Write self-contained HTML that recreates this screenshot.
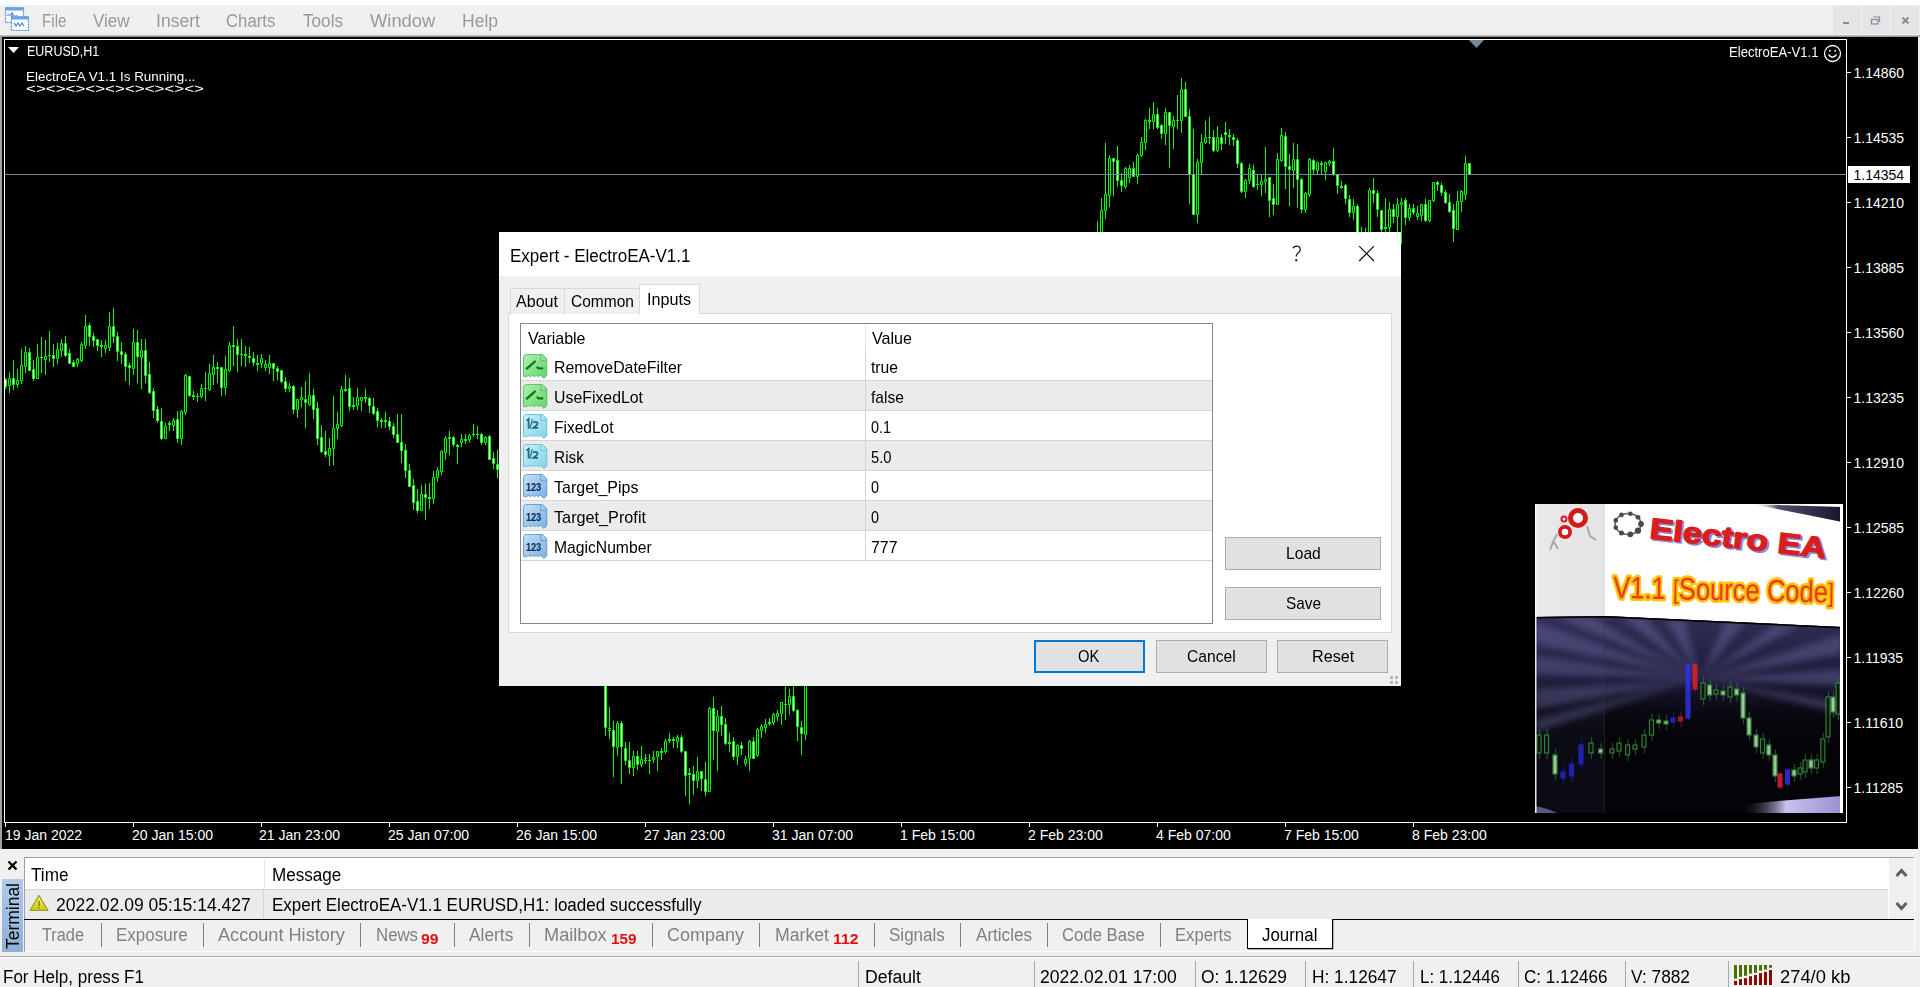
<!DOCTYPE html><html><head><meta charset="utf-8"><style>
*{margin:0;padding:0;box-sizing:border-box}
html,body{width:1920px;height:987px;overflow:hidden;background:#f0f0f0;font-family:"Liberation Sans",sans-serif;position:relative}
.t{position:absolute;white-space:nowrap}
svg{position:absolute;left:0;top:0}
</style></head><body><div style="position:absolute;left:0px;top:0px;width:1920px;height:5px;background:#fff"></div><div style="position:absolute;left:0px;top:5px;width:1920px;height:30px;background:#f0f0f0"></div><svg style="left:4px;top:6px" width="26" height="26" viewBox="0 0 26 26">
<rect x="1.5" y="1.5" width="18" height="15" fill="#fff" stroke="#4a8ae8" stroke-width="1.2" stroke-dasharray="2 1"/>
<rect x="1.5" y="1.5" width="18" height="3" fill="#6aa0f0"/>
<path d="M3 9 h4 l1-2 l1 3 h5" stroke="#3a7ad8" fill="none" stroke-width="1.2"/>
<rect x="7.5" y="10.5" width="17" height="14" fill="#fff" stroke="#4a8ae8" stroke-width="1.2" stroke-dasharray="2 1"/>
<rect x="7.5" y="10.5" width="17" height="3" fill="#6aa0f0"/>
<path d="M10 17 l2 3 l2-3 l2 3 l2-3 l2 3" stroke="#3a7ad8" fill="none" stroke-width="1.2"/>
</svg><div class="t " style="left:41.5px;top:11.76px;font-size:18px;line-height:18px;color:#999999;transform:scaleX(0.8447);transform-origin:0 0;">File</div><div class="t " style="left:93px;top:11.76px;font-size:18px;line-height:18px;color:#999999;transform:scaleX(0.9486);transform-origin:0 0;">View</div><div class="t " style="left:156px;top:11.76px;font-size:18px;line-height:18px;color:#999999;transform:scaleX(0.9774);transform-origin:0 0;">Insert</div><div class="t " style="left:226px;top:11.76px;font-size:18px;line-height:18px;color:#999999;transform:scaleX(0.9318);transform-origin:0 0;">Charts</div><div class="t " style="left:302.5px;top:11.76px;font-size:18px;line-height:18px;color:#999999;transform:scaleX(0.9519);transform-origin:0 0;">Tools</div><div class="t " style="left:369.7px;top:11.76px;font-size:18px;line-height:18px;color:#999999;transform:scaleX(1.0200);transform-origin:0 0;">Window</div><div class="t " style="left:461.6px;top:11.76px;font-size:18px;line-height:18px;color:#999999;transform:scaleX(0.9725);transform-origin:0 0;">Help</div><div style="position:absolute;left:1833px;top:6px;width:28px;height:28px;background:#e5e5e5"></div><div style="position:absolute;left:1862px;top:6px;width:28px;height:28px;background:#e5e5e5"></div><div style="position:absolute;left:1891px;top:6px;width:28px;height:28px;background:#e5e5e5"></div><svg style="left:1833px;top:6px" width="86" height="28">
<rect x="10" y="16" width="6" height="2" fill="#7e8e9e"/>
<rect x="38.5" y="13.5" width="6.5" height="4.5" fill="none" stroke="#7e8e9e" stroke-width="1.2"/>
<path d="M40.5 11 h6 v5" fill="none" stroke="#7e8e9e" stroke-width="1.2"/>
<path d="M69.5 11.5 l6 6 M75.5 11.5 l-6 6" stroke="#7e8e9e" stroke-width="2"/>
</svg><div style="position:absolute;left:0px;top:35px;width:1920px;height:2px;background:linear-gradient(#c8c8c8,#8a8a8a)"></div><div style="position:absolute;left:0px;top:37px;width:2px;height:812px;background:#a0a0a0"></div><div style="position:absolute;left:2px;top:37px;width:1916px;height:812px;background:#000"></div><div style="position:absolute;left:1918px;top:37px;width:2px;height:812px;background:#f0f0f0"></div><div style="position:absolute;left:4px;top:39px;width:1843px;height:784px;border:1px solid #fff"></div><svg width="1920" height="987" style="left:0;top:0"><defs><clipPath id="cc"><rect x="5" y="40" width="1841" height="782"/></clipPath></defs><g clip-path="url(#cc)"><path d="M5.5 378V389M9.5 372V393M13.5 360V390M17.5 369V388M21.5 349V384M25.5 346V373M29.5 348V371M33.5 360V381M37.5 344V379M41.5 337V373M45.5 340V375M49.5 331V362M53.5 344V367M57.5 343V364M61.5 339V357M65.5 336V357M69.5 349V364M73.5 360V367M77.5 358V367M81.5 342V362M85.5 315V349M89.5 323V346M93.5 333V347M97.5 339V351M101.5 340V357M105.5 340V353M109.5 312V351M113.5 308V343M117.5 332V361M121.5 342V364M125.5 352V381M129.5 363V385M133.5 329V375M137.5 330V383M141.5 339V389M145.5 339V383M149.5 362V394M153.5 388V418M157.5 406V423M161.5 408V440M165.5 423V439M169.5 421V431M173.5 418V431M177.5 411V443M181.5 410V445M185.5 374V415M189.5 376V397M193.5 391V400M197.5 393V402M201.5 384V398M205.5 372V401M209.5 364V391M213.5 355V385M217.5 362V383M221.5 367V396M225.5 356V395M229.5 342V372M233.5 326V366M237.5 339V372M241.5 339V366M245.5 346V367M249.5 347V363M253.5 352V366M257.5 355V371M261.5 354V368M265.5 360V371M269.5 355V374M273.5 363V381M277.5 366V380M281.5 370V383M285.5 377V392M289.5 383V392M293.5 385V414M297.5 399V418M301.5 387V407M305.5 381V428M309.5 373V406M313.5 389V419M317.5 402V445M321.5 425V453M325.5 431V457M329.5 438V466M333.5 396V465M337.5 412V439M341.5 386V427M345.5 375V392M349.5 378V411M353.5 397V410M357.5 388V410M361.5 397V411M365.5 389V403M369.5 397V413M373.5 398V415M377.5 408V427M381.5 418V428M385.5 412V428M389.5 417V430M393.5 423V438M397.5 414V443M401.5 414V463M405.5 444V478M409.5 464V487M413.5 479V510M417.5 489V513M421.5 485V511M425.5 484V520M429.5 483V509M433.5 471V504M437.5 467V482M441.5 450V475M445.5 436V460M449.5 431V455M453.5 436V447M457.5 444V464M461.5 434V447M465.5 434V444M469.5 434V443M473.5 424V437M477.5 426V439M481.5 433V445M485.5 436V445M489.5 435V460M493.5 452V469M497.5 450V478M501.5 472V480M505.5 480V487M509.5 491V497M513.5 489V508M517.5 499V511M521.5 515V524M525.5 520V531M529.5 527V544M533.5 535V546M537.5 541V557M541.5 550V563M545.5 555V575M549.5 565V583M553.5 578V596M557.5 590V601M561.5 593V606M565.5 605V614M569.5 614V628M573.5 619V630M577.5 626V639M581.5 642V651M585.5 647V657M589.5 653V674M593.5 658V677M597.5 666V675M601.5 668V677M605.5 655V736M609.5 707V739M613.5 721V777M617.5 721V756M621.5 721V784M625.5 742V765M629.5 742V774M633.5 751V776M637.5 751V770M641.5 746V767M645.5 754V764M649.5 754V774M653.5 751V763M657.5 751V771M661.5 748V760M665.5 739V754M669.5 733V743M673.5 737V748M677.5 735V748M681.5 735V753M685.5 751V796M689.5 768V804M693.5 766V795M697.5 757V788M701.5 771V791M705.5 762V796M709.5 707V792M713.5 697V760M717.5 710V771M721.5 706V736M725.5 718V745M729.5 733V752M733.5 737V760M737.5 744V765M741.5 742V755M745.5 756V766M749.5 740V771M753.5 737V759M757.5 728V757M761.5 724V738M765.5 719V733M769.5 718V726M773.5 713V725M777.5 710V721M781.5 702V725M785.5 686V720M789.5 689V715M793.5 686V712M797.5 709V741M801.5 721V755M805.5 660V740M809.5 665V680M813.5 663V679M817.5 666V677M821.5 666V681M825.5 665V676M829.5 660V671M833.5 652V665M837.5 644V659M841.5 637V648M845.5 637V646M849.5 624V642M853.5 622V632M857.5 609V630M861.5 602V620M865.5 599V616M869.5 597V614M873.5 594V600M877.5 581V597M881.5 573V588M885.5 572V588M889.5 561V575M893.5 552V567M897.5 546V570M901.5 544V557M905.5 538V554M909.5 528V546M913.5 526V540M917.5 514V536M921.5 511V527M925.5 504V523M929.5 494V510M933.5 495V507M937.5 487V498M941.5 480V494M945.5 475V491M949.5 463V488M953.5 463V477M957.5 458V470M961.5 451V465M965.5 446V458M969.5 432V451M973.5 430V451M977.5 424V442M981.5 417V436M985.5 411V425M989.5 402V417M993.5 399V416M997.5 393V405M1001.5 389V402M1005.5 374V391M1009.5 378V390M1013.5 364V380M1017.5 361V374M1021.5 350V370M1025.5 352V361M1029.5 339V357M1033.5 339V346M1037.5 327V350M1041.5 325V334M1045.5 318V329M1049.5 311V321M1053.5 305V320M1057.5 294V315M1061.5 294V306M1065.5 279V302M1069.5 276V296M1073.5 271V286M1077.5 262V285M1081.5 258V272M1085.5 250V267M1089.5 243V258M1093.5 241V255M1097.5 221V256M1101.5 198V251M1105.5 143V219M1109.5 155V207M1113.5 158V196M1117.5 146V187M1121.5 173V192M1125.5 167V189M1129.5 165V183M1133.5 162V177M1137.5 154V184M1141.5 137V157M1145.5 119V150M1149.5 108V129M1153.5 102V129M1157.5 108V129M1161.5 124V139M1165.5 108V145M1169.5 112V168M1173.5 116V149M1177.5 95V129M1181.5 78V133M1185.5 82V117M1189.5 109V204M1193.5 129V215M1197.5 159V223M1201.5 134V175M1205.5 121V144M1209.5 117V144M1213.5 130V152M1217.5 126V152M1221.5 134V150M1225.5 122V144M1229.5 129V145M1233.5 134V146M1237.5 138V168M1241.5 162V193M1245.5 179V198M1249.5 164V184M1253.5 165V188M1257.5 174V190M1261.5 175V196M1265.5 147V193M1269.5 177V217M1273.5 184V215M1277.5 153V205M1281.5 128V162M1285.5 132V189M1289.5 154V206M1293.5 143V188M1297.5 144V208M1301.5 178V213M1305.5 192V213M1309.5 158V197M1313.5 159V175M1317.5 162V175M1321.5 161V175M1325.5 162V180M1329.5 160V166M1333.5 148V176M1337.5 174V194M1341.5 181V189M1345.5 184V204M1349.5 195V217M1353.5 199V220M1357.5 204V246M1361.5 227V256M1365.5 228V251M1369.5 188V243M1373.5 178V203M1377.5 190V217M1381.5 210V236M1385.5 198V236M1389.5 202V236M1393.5 204V223M1397.5 198V236M1401.5 198V244M1405.5 198V225M1409.5 204V221M1413.5 204V215M1417.5 206V220M1421.5 204V221M1425.5 199V222M1429.5 200V222M1433.5 182V202M1437.5 181V191M1441.5 183V196M1445.5 190V204M1449.5 194V213M1453.5 204V242M1457.5 191V230M1461.5 190V212M1465.5 156V200M1469.5 163V175" stroke="#00ff00" stroke-width="1" fill="none"/><path d="M8.5 378.5h2v7h-2zM16.5 380.5h2v4h-2zM20.5 365.5h2v15h-2zM24.5 352.5h2v14h-2zM36.5 357.5h2v21h-2zM44.5 356.5h2v3h-2zM56.5 349.5h2v9h-2zM60.5 343.5h2v7h-2zM76.5 359.5h2v4h-2zM80.5 344.5h2v16h-2zM84.5 326.5h2v19h-2zM104.5 345.5h2v3h-2zM108.5 326.5h2v21h-2zM132.5 342.5h2v26h-2zM140.5 350.5h2v7h-2zM164.5 426.5h2v12h-2zM172.5 420.5h2v5h-2zM180.5 411.5h2v27h-2zM184.5 375.5h2v37h-2zM200.5 388.5h2v8h-2zM208.5 373.5h2v16h-2zM212.5 367.5h2v7h-2zM224.5 369.5h2v18h-2zM228.5 345.5h2v25h-2zM260.5 358.5h2v5h-2zM264.5 364.5h2v3h-2zM268.5 363.5h2v4h-2zM288.5 386.5h2v2h-2zM296.5 399.5h2v10h-2zM300.5 397.5h2v2h-2zM308.5 395.5h2v9h-2zM328.5 448.5h2v7h-2zM332.5 428.5h2v20h-2zM336.5 424.5h2v4h-2zM340.5 389.5h2v36h-2zM356.5 397.5h2v8h-2zM360.5 397.5h2v3h-2zM420.5 494.5h2v16h-2zM432.5 477.5h2v21h-2zM436.5 470.5h2v7h-2zM440.5 451.5h2v20h-2zM444.5 438.5h2v14h-2zM460.5 439.5h2v3h-2zM468.5 435.5h2v4h-2zM484.5 437.5h2v5h-2zM500.5 472.5h2v4h-2zM504.5 480.5h2v4h-2zM512.5 492.5h2v13h-2zM516.5 501.5h2v8h-2zM520.5 516.5h2v3h-2zM524.5 524.5h2v2h-2zM532.5 539.5h2v5h-2zM544.5 560.5h2v11h-2zM568.5 615.5h2v10h-2zM580.5 642.5h2v3h-2zM584.5 650.5h2v4h-2zM588.5 655.5h2v12h-2zM596.5 666.5h2v7h-2zM600.5 669.5h2v4h-2zM616.5 723.5h2v24h-2zM632.5 756.5h2v11h-2zM640.5 759.5h2v5h-2zM652.5 757.5h2v2h-2zM656.5 751.5h2v5h-2zM664.5 741.5h2v10h-2zM676.5 737.5h2v4h-2zM696.5 771.5h2v9h-2zM708.5 708.5h2v83h-2zM716.5 716.5h2v15h-2zM736.5 745.5h2v11h-2zM744.5 759.5h2v4h-2zM748.5 741.5h2v17h-2zM756.5 729.5h2v26h-2zM760.5 726.5h2v4h-2zM764.5 724.5h2v3h-2zM772.5 714.5h2v8h-2zM776.5 713.5h2v3h-2zM780.5 702.5h2v11h-2zM788.5 696.5h2v8h-2zM804.5 670.5h2v64h-2zM808.5 666.5h2v12h-2zM828.5 664.5h2v4h-2zM832.5 655.5h2v4h-2zM836.5 649.5h2v4h-2zM852.5 624.5h2v4h-2zM856.5 612.5h2v13h-2zM860.5 607.5h2v7h-2zM864.5 601.5h2v10h-2zM872.5 594.5h2v2h-2zM880.5 578.5h2v5h-2zM884.5 575.5h2v7h-2zM900.5 549.5h2v3h-2zM904.5 539.5h2v11h-2zM912.5 528.5h2v10h-2zM916.5 519.5h2v10h-2zM920.5 515.5h2v9h-2zM924.5 508.5h2v8h-2zM928.5 499.5h2v9h-2zM932.5 499.5h2v4h-2zM936.5 492.5h2v4h-2zM940.5 482.5h2v11h-2zM944.5 477.5h2v10h-2zM948.5 467.5h2v14h-2zM960.5 452.5h2v6h-2zM964.5 448.5h2v8h-2zM968.5 437.5h2v8h-2zM976.5 426.5h2v10h-2zM984.5 411.5h2v7h-2zM992.5 404.5h2v5h-2zM1000.5 391.5h2v5h-2zM1004.5 378.5h2v9h-2zM1016.5 366.5h2v3h-2zM1040.5 327.5h2v5h-2zM1044.5 321.5h2v7h-2zM1052.5 308.5h2v8h-2zM1060.5 294.5h2v6h-2zM1064.5 284.5h2v13h-2zM1068.5 281.5h2v11h-2zM1072.5 272.5h2v12h-2zM1080.5 261.5h2v10h-2zM1084.5 254.5h2v12h-2zM1088.5 248.5h2v8h-2zM1096.5 232.5h2v18h-2zM1100.5 210.5h2v30h-2zM1104.5 194.5h2v16h-2zM1108.5 158.5h2v37h-2zM1124.5 168.5h2v18h-2zM1128.5 168.5h2v9h-2zM1136.5 155.5h2v21h-2zM1140.5 142.5h2v13h-2zM1144.5 120.5h2v22h-2zM1152.5 114.5h2v7h-2zM1164.5 112.5h2v21h-2zM1172.5 120.5h2v6h-2zM1180.5 89.5h2v31h-2zM1196.5 162.5h2v52h-2zM1200.5 142.5h2v20h-2zM1204.5 137.5h2v5h-2zM1216.5 137.5h2v13h-2zM1244.5 180.5h2v11h-2zM1248.5 168.5h2v12h-2zM1260.5 181.5h2v3h-2zM1264.5 179.5h2v2h-2zM1276.5 159.5h2v45h-2zM1280.5 135.5h2v25h-2zM1292.5 159.5h2v11h-2zM1304.5 193.5h2v16h-2zM1308.5 159.5h2v35h-2zM1316.5 162.5h2v8h-2zM1324.5 162.5h2v9h-2zM1328.5 161.5h2v2h-2zM1352.5 206.5h2v6h-2zM1364.5 236.5h2v9h-2zM1368.5 190.5h2v48h-2zM1388.5 209.5h2v18h-2zM1396.5 204.5h2v12h-2zM1400.5 202.5h2v2h-2zM1408.5 208.5h2v9h-2zM1416.5 213.5h2v3h-2zM1420.5 204.5h2v11h-2zM1428.5 200.5h2v20h-2zM1432.5 182.5h2v18h-2zM1456.5 201.5h2v28h-2zM1460.5 191.5h2v10h-2zM1464.5 163.5h2v31h-2z" stroke="#00ff00" stroke-width="1" fill="#000"/><path d="M4.5 379.5h2v7h-2zM12.5 378.5h2v6h-2zM28.5 352.5h2v18h-2zM32.5 369.5h2v9h-2zM52.5 355.5h2v3h-2zM64.5 343.5h2v12h-2zM68.5 353.5h2v10h-2zM72.5 362.5h2v4h-2zM88.5 325.5h2v11h-2zM92.5 336.5h2v4h-2zM96.5 339.5h2v6h-2zM112.5 326.5h2v10h-2zM116.5 336.5h2v15h-2zM120.5 351.5h2v3h-2zM124.5 354.5h2v12h-2zM128.5 365.5h2v2h-2zM136.5 342.5h2v14h-2zM144.5 350.5h2v25h-2zM148.5 374.5h2v18h-2zM152.5 391.5h2v19h-2zM156.5 409.5h2v11h-2zM160.5 421.5h2v17h-2zM176.5 419.5h2v19h-2zM188.5 376.5h2v19h-2zM220.5 367.5h2v20h-2zM236.5 346.5h2v8h-2zM252.5 358.5h2v4h-2zM272.5 363.5h2v5h-2zM276.5 368.5h2v3h-2zM280.5 370.5h2v11h-2zM284.5 381.5h2v7h-2zM292.5 386.5h2v23h-2zM304.5 399.5h2v3h-2zM312.5 395.5h2v14h-2zM316.5 408.5h2v30h-2zM320.5 437.5h2v14h-2zM324.5 451.5h2v3h-2zM348.5 388.5h2v18h-2zM368.5 398.5h2v7h-2zM372.5 406.5h2v7h-2zM376.5 411.5h2v9h-2zM388.5 421.5h2v5h-2zM392.5 426.5h2v8h-2zM396.5 434.5h2v8h-2zM400.5 442.5h2v8h-2zM404.5 450.5h2v20h-2zM408.5 470.5h2v16h-2zM412.5 485.5h2v17h-2zM416.5 501.5h2v9h-2zM424.5 494.5h2v3h-2zM452.5 437.5h2v7h-2zM480.5 434.5h2v8h-2zM488.5 436.5h2v23h-2zM492.5 458.5h2v5h-2zM496.5 464.5h2v5h-2zM528.5 530.5h2v8h-2zM536.5 546.5h2v9h-2zM540.5 551.5h2v9h-2zM548.5 569.5h2v9h-2zM552.5 580.5h2v11h-2zM556.5 592.5h2v6h-2zM560.5 596.5h2v5h-2zM564.5 605.5h2v6h-2zM572.5 624.5h2v3h-2zM576.5 631.5h2v6h-2zM592.5 661.5h2v13h-2zM604.5 660.5h2v67h-2zM612.5 730.5h2v16h-2zM620.5 723.5h2v23h-2zM624.5 748.5h2v12h-2zM628.5 760.5h2v7h-2zM636.5 756.5h2v8h-2zM680.5 737.5h2v14h-2zM684.5 751.5h2v24h-2zM692.5 774.5h2v6h-2zM700.5 771.5h2v7h-2zM704.5 779.5h2v12h-2zM712.5 708.5h2v22h-2zM720.5 716.5h2v8h-2zM724.5 724.5h2v19h-2zM732.5 741.5h2v15h-2zM740.5 745.5h2v3h-2zM752.5 741.5h2v17h-2zM792.5 696.5h2v14h-2zM796.5 710.5h2v16h-2zM800.5 727.5h2v6h-2zM812.5 667.5h2v8h-2zM816.5 669.5h2v5h-2zM820.5 669.5h2v7h-2zM824.5 666.5h2v6h-2zM840.5 639.5h2v8h-2zM844.5 639.5h2v2h-2zM848.5 630.5h2v9h-2zM868.5 600.5h2v9h-2zM876.5 585.5h2v9h-2zM888.5 563.5h2v8h-2zM892.5 557.5h2v9h-2zM896.5 551.5h2v13h-2zM908.5 532.5h2v10h-2zM952.5 465.5h2v7h-2zM956.5 462.5h2v4h-2zM972.5 431.5h2v13h-2zM980.5 423.5h2v8h-2zM988.5 408.5h2v6h-2zM996.5 397.5h2v3h-2zM1008.5 378.5h2v6h-2zM1012.5 370.5h2v8h-2zM1020.5 356.5h2v8h-2zM1024.5 355.5h2v5h-2zM1028.5 343.5h2v8h-2zM1032.5 342.5h2v2h-2zM1036.5 328.5h2v16h-2zM1048.5 315.5h2v2h-2zM1056.5 298.5h2v11h-2zM1076.5 267.5h2v13h-2zM1092.5 244.5h2v8h-2zM1112.5 158.5h2v3h-2zM1116.5 160.5h2v20h-2zM1120.5 180.5h2v5h-2zM1132.5 168.5h2v8h-2zM1156.5 114.5h2v13h-2zM1160.5 125.5h2v8h-2zM1168.5 112.5h2v13h-2zM1184.5 89.5h2v27h-2zM1188.5 116.5h2v58h-2zM1192.5 174.5h2v40h-2zM1212.5 137.5h2v13h-2zM1220.5 137.5h2v6h-2zM1224.5 132.5h2v2h-2zM1232.5 137.5h2v2h-2zM1236.5 140.5h2v23h-2zM1240.5 163.5h2v28h-2zM1252.5 170.5h2v16h-2zM1268.5 177.5h2v23h-2zM1272.5 198.5h2v6h-2zM1284.5 136.5h2v30h-2zM1288.5 166.5h2v3h-2zM1296.5 159.5h2v20h-2zM1300.5 179.5h2v30h-2zM1312.5 160.5h2v9h-2zM1332.5 161.5h2v13h-2zM1336.5 174.5h2v11h-2zM1344.5 185.5h2v13h-2zM1348.5 199.5h2v13h-2zM1356.5 206.5h2v34h-2zM1360.5 236.5h2v14h-2zM1372.5 190.5h2v3h-2zM1376.5 193.5h2v16h-2zM1380.5 210.5h2v19h-2zM1392.5 209.5h2v7h-2zM1404.5 200.5h2v17h-2zM1412.5 208.5h2v4h-2zM1424.5 204.5h2v16h-2zM1436.5 182.5h2v2h-2zM1440.5 185.5h2v7h-2zM1444.5 192.5h2v10h-2zM1448.5 202.5h2v9h-2zM1452.5 210.5h2v18h-2zM1468.5 163.5h2v11h-2z" stroke="#00ff00" stroke-width="1" fill="#fff"/><path d="M40 357.5h3M48 355.5h3M100 345.5h3M100 346.5h3M168 423.5h3M168 424.5h3M192 395.5h3M192 396.5h3M196 396.5h3M204 388.5h3M216 367.5h3M216 368.5h3M232 345.5h3M232 346.5h3M240 354.5h3M244 354.5h3M244 355.5h3M248 356.5h3M248 357.5h3M256 363.5h3M256 364.5h3M344 389.5h3M344 390.5h3M352 405.5h3M352 406.5h3M364 397.5h3M364 398.5h3M380 420.5h3M380 421.5h3M384 420.5h3M384 421.5h3M428 497.5h3M428 498.5h3M448 437.5h3M448 438.5h3M456 445.5h3M456 446.5h3M464 439.5h3M464 440.5h3M472 434.5h3M476 434.5h3M508 491.5h3M508 492.5h3M608 728.5h3M608 730.5h3M644 758.5h3M644 760.5h3M648 760.5h3M660 751.5h3M660 752.5h3M668 739.5h3M668 740.5h3M672 739.5h3M672 740.5h3M688 773.5h3M688 774.5h3M728 742.5h3M728 743.5h3M768 722.5h3M768 723.5h3M784 704.5h3M1148 120.5h3M1148 121.5h3M1176 120.5h3M1208 137.5h3M1228 135.5h3M1228 136.5h3M1256 184.5h3M1320 163.5h3M1320 164.5h3M1340 186.5h3M1340 187.5h3M1384 227.5h3M1384 228.5h3" stroke="#00ff00" stroke-width="1" fill="none"/></g><rect x="5" y="174" width="1841" height="1" fill="#778899"/><path d="M1469 40 H1484 L1476.5 48 Z" fill="#778899"/><rect x="1847" y="72" width="4" height="1" fill="#fff"/><rect x="1847" y="137" width="4" height="1" fill="#fff"/><rect x="1847" y="202" width="4" height="1" fill="#fff"/><rect x="1847" y="267" width="4" height="1" fill="#fff"/><rect x="1847" y="332" width="4" height="1" fill="#fff"/><rect x="1847" y="397" width="4" height="1" fill="#fff"/><rect x="1847" y="462" width="4" height="1" fill="#fff"/><rect x="1847" y="527" width="4" height="1" fill="#fff"/><rect x="1847" y="592" width="4" height="1" fill="#fff"/><rect x="1847" y="657" width="4" height="1" fill="#fff"/><rect x="1847" y="722" width="4" height="1" fill="#fff"/><rect x="1847" y="787" width="4" height="1" fill="#fff"/><rect x="5" y="823" width="1" height="4" fill="#fff"/><rect x="133" y="823" width="1" height="4" fill="#fff"/><rect x="261" y="823" width="1" height="4" fill="#fff"/><rect x="389" y="823" width="1" height="4" fill="#fff"/><rect x="517" y="823" width="1" height="4" fill="#fff"/><rect x="645" y="823" width="1" height="4" fill="#fff"/><rect x="773" y="823" width="1" height="4" fill="#fff"/><rect x="901" y="823" width="1" height="4" fill="#fff"/><rect x="1029" y="823" width="1" height="4" fill="#fff"/><rect x="1157" y="823" width="1" height="4" fill="#fff"/><rect x="1285" y="823" width="1" height="4" fill="#fff"/><rect x="1413" y="823" width="1" height="4" fill="#fff"/></svg><div class="t " style="left:1853.5px;top:66.15px;font-size:14px;line-height:14px;color:#fff;">1.14860</div><div class="t " style="left:1853.5px;top:131.15px;font-size:14px;line-height:14px;color:#fff;">1.14535</div><div class="t " style="left:1853.5px;top:196.15px;font-size:14px;line-height:14px;color:#fff;">1.14210</div><div class="t " style="left:1853.5px;top:261.15px;font-size:14px;line-height:14px;color:#fff;">1.13885</div><div class="t " style="left:1853.5px;top:326.15px;font-size:14px;line-height:14px;color:#fff;">1.13560</div><div class="t " style="left:1853.5px;top:391.15px;font-size:14px;line-height:14px;color:#fff;">1.13235</div><div class="t " style="left:1853.5px;top:456.15px;font-size:14px;line-height:14px;color:#fff;">1.12910</div><div class="t " style="left:1853.5px;top:521.15px;font-size:14px;line-height:14px;color:#fff;">1.12585</div><div class="t " style="left:1853.5px;top:586.15px;font-size:14px;line-height:14px;color:#fff;">1.12260</div><div class="t " style="left:1853.5px;top:651.15px;font-size:14px;line-height:14px;color:#fff;">1.11935</div><div class="t " style="left:1853.5px;top:716.15px;font-size:14px;line-height:14px;color:#fff;">1.11610</div><div class="t " style="left:1853.5px;top:781.15px;font-size:14px;line-height:14px;color:#fff;">1.11285</div><div style="position:absolute;left:1848px;top:166px;width:62px;height:17px;background:#fff"></div><div class="t " style="left:1853.5px;top:168.15px;font-size:14px;line-height:14px;color:#000;">1.14354</div><div class="t " style="left:5px;top:828.15px;font-size:14px;line-height:14px;color:#fff;">19 Jan 2022</div><div class="t " style="left:132px;top:828.15px;font-size:14px;line-height:14px;color:#fff;">20 Jan 15:00</div><div class="t " style="left:259px;top:828.15px;font-size:14px;line-height:14px;color:#fff;">21 Jan 23:00</div><div class="t " style="left:388px;top:828.15px;font-size:14px;line-height:14px;color:#fff;">25 Jan 07:00</div><div class="t " style="left:516px;top:828.15px;font-size:14px;line-height:14px;color:#fff;">26 Jan 15:00</div><div class="t " style="left:644px;top:828.15px;font-size:14px;line-height:14px;color:#fff;">27 Jan 23:00</div><div class="t " style="left:772px;top:828.15px;font-size:14px;line-height:14px;color:#fff;">31 Jan 07:00</div><div class="t " style="left:900px;top:828.15px;font-size:14px;line-height:14px;color:#fff;">1 Feb 15:00</div><div class="t " style="left:1028px;top:828.15px;font-size:14px;line-height:14px;color:#fff;">2 Feb 23:00</div><div class="t " style="left:1156px;top:828.15px;font-size:14px;line-height:14px;color:#fff;">4 Feb 07:00</div><div class="t " style="left:1284px;top:828.15px;font-size:14px;line-height:14px;color:#fff;">7 Feb 15:00</div><div class="t " style="left:1412px;top:828.15px;font-size:14px;line-height:14px;color:#fff;">8 Feb 23:00</div><svg style="left:8px;top:47px" width="12" height="8"><path d="M0 0H11L5.5 6Z" fill="#fff"/></svg><div class="t " style="left:26.5px;top:44.15px;font-size:14px;line-height:14px;color:#fff;transform:scaleX(0.8930);transform-origin:0 0;">EURUSD,H1</div><div class="t " style="left:25.7px;top:69.57px;font-size:13.5px;line-height:13.5px;color:#fff;transform:scaleX(0.9939);transform-origin:0 0;">ElectroEA V1.1 Is Running...</div><div class="t " style="left:25.7px;top:82.00px;font-size:13px;line-height:13px;color:#fff;transform:scaleX(1.3025);transform-origin:0 0;">&lt;&gt;&lt;&gt;&lt;&gt;&lt;&gt;&lt;&gt;&lt;&gt;&lt;&gt;&lt;&gt;&lt;&gt;</div><div class="t " style="left:1728.6px;top:45.15px;font-size:14px;line-height:14px;color:#fff;transform:scaleX(0.9341);transform-origin:0 0;">ElectroEA-V1.1</div><svg style="left:1823px;top:44px" width="20" height="20"><circle cx="9.5" cy="9.5" r="8" fill="none" stroke="#fff" stroke-width="1.3"/><rect x="6" y="6" width="1.6" height="1.6" fill="#fff"/><rect x="11.5" y="6" width="1.6" height="1.6" fill="#fff"/><path d="M5.5 10.5 Q9.5 16 13.5 10.5" fill="none" stroke="#fff" stroke-width="1.3"/></svg><svg style="left:1535px;top:504px" width="308" height="309" viewBox="0 0 308 309">
<defs>
<radialGradient id="rays" cx="0.5" cy="0.55" r="0.75">
<stop offset="0" stop-color="#000"/><stop offset="0.35" stop-color="#101020"/><stop offset="0.75" stop-color="#2c2a4a"/><stop offset="1" stop-color="#3a3860"/>
</radialGradient>
<linearGradient id="lgray" x1="0" x2="1"><stop offset="0" stop-color="#e9e9eb"/><stop offset="1" stop-color="#e4e4e6"/></linearGradient>
<linearGradient id="streak" x1="0" x2="1" y1="0" y2="0"><stop offset="0" stop-color="#fff" stop-opacity="0"/><stop offset="0.3" stop-color="#505070"/><stop offset="1" stop-color="#15152a"/></linearGradient>
<linearGradient id="botst" x1="0" x2="1"><stop offset="0" stop-color="#000" stop-opacity="0"/><stop offset="0.45" stop-color="#000" stop-opacity="0"/><stop offset="0.7" stop-color="#c8c0ee"/><stop offset="1" stop-color="#9a90d0"/></linearGradient>
<linearGradient id="vfade" x1="0" y1="0" x2="0" y2="1"><stop offset="0" stop-color="#34325a"/><stop offset="0.35" stop-color="#1e1c3a"/><stop offset="0.7" stop-color="#000" stop-opacity="0"/></linearGradient><filter id="cbl"><feGaussianBlur stdDeviation="0.7"/></filter>
<clipPath id="dk"><path d="M0 113 L70 112 L307 123 V309 H0 Z"/></clipPath>
</defs>
<rect x="0" y="0" width="308" height="309" fill="#fff"/>
<rect x="0" y="0" width="70" height="115" fill="url(#lgray)"/>
<path d="M215 0 L307 3 L307 18 Q260 8 215 0Z" fill="url(#streak)"/>
<g clip-path="url(#dk)">
<rect x="0" y="100" width="308" height="209" fill="#040408"/>
<rect x="0" y="100" width="308" height="209" fill="url(#vfade)"/>
<filter id="bl"><feGaussianBlur stdDeviation="3"/></filter>
<g fill="#8c88c8" opacity="0.30" filter="url(#bl)">
<path d="M165 175 L0 118 L0 140 Z"/><path d="M165 175 L0 152 L0 170 Z"/><path d="M165 175 L0 185 L0 205 Z"/><path d="M165 175 L0 215 L0 228 Z"/>
<path d="M165 175 L20 112 L55 112 Z"/><path d="M165 175 L85 112 L110 113 Z"/><path d="M165 175 L130 115 L150 116 Z"/>
<path d="M165 175 L190 117 L210 118 Z"/><path d="M165 175 L240 120 L265 121 Z"/>
<path d="M165 175 L307 130 L307 150 Z"/><path d="M165 175 L307 165 L307 182 Z"/><path d="M165 175 L307 198 L307 210 Z"/>
</g>
<rect x="0" y="100" width="70" height="209" fill="#50508a" opacity="0.10"/>
<rect x="69" y="100" width="1" height="209" fill="#30304a" opacity="0.5"/>
<g filter="url(#cbl)" opacity="0.85">
<rect x="3.9" y="225.0" width="1.2" height="30" fill="#3c9040" opacity="0.6"/><rect x="2.0" y="231" width="4" height="18" fill="#0a140a" stroke="#3c9040" stroke-width="1.2"/><rect x="11.5" y="225.0" width="1.2" height="30" fill="#3c9040" opacity="0.6"/><rect x="9.6" y="231" width="4" height="18" fill="#0a140a" stroke="#3c9040" stroke-width="1.2"/><rect x="19.9" y="245.0" width="1.2" height="31" fill="#3c9040" opacity="0.6"/><rect x="18.0" y="251" width="4" height="19" fill="#b8e8b0" stroke="#3c9040" stroke-width="1.2"/><rect x="27.9" y="262.0" width="1.2" height="18" fill="#2828c8" opacity="0.6"/><rect x="26.0" y="268" width="4" height="6" fill="#2828c8" stroke="#2828c8" stroke-width="1.2"/><rect x="36.4" y="254.0" width="1.2" height="24" fill="#2828c8" opacity="0.6"/><rect x="34.5" y="260" width="4" height="12" fill="#2828c8" stroke="#2828c8" stroke-width="1.2"/><rect x="45.9" y="235.0" width="1.2" height="31" fill="#2828c8" opacity="0.6"/><rect x="44.0" y="241" width="4" height="19" fill="#2828c8" stroke="#2828c8" stroke-width="1.2"/><rect x="55.9" y="233.0" width="1.2" height="22" fill="#3c9040" opacity="0.6"/><rect x="54.0" y="239" width="4" height="10" fill="#0a140a" stroke="#3c9040" stroke-width="1.2"/><rect x="65.5" y="239.0" width="1.2" height="16" fill="#3c9040" opacity="0.6"/><rect x="63.6" y="245" width="4" height="4" fill="#b8e8b0" stroke="#3c9040" stroke-width="1.2"/><rect x="76.9" y="239.0" width="1.2" height="16" fill="#3c9040" opacity="0.6"/><rect x="75.0" y="245" width="4" height="4" fill="#0a140a" stroke="#3c9040" stroke-width="1.2"/><rect x="83.9" y="233.0" width="1.2" height="20" fill="#3c9040" opacity="0.6"/><rect x="82.0" y="239" width="4" height="8" fill="#0a140a" stroke="#3c9040" stroke-width="1.2"/><rect x="92.5" y="235.0" width="1.2" height="22" fill="#3c9040" opacity="0.6"/><rect x="90.6" y="241" width="4" height="10" fill="#0a140a" stroke="#3c9040" stroke-width="1.2"/><rect x="99.9" y="235.0" width="1.2" height="16" fill="#3c9040" opacity="0.6"/><rect x="98.0" y="241" width="4" height="4" fill="#0a140a" stroke="#3c9040" stroke-width="1.2"/><rect x="108.9" y="225.0" width="1.2" height="24" fill="#3c9040" opacity="0.6"/><rect x="107.0" y="231" width="4" height="12" fill="#0a140a" stroke="#3c9040" stroke-width="1.2"/><rect x="116.4" y="210.0" width="1.2" height="27" fill="#3c9040" opacity="0.6"/><rect x="114.5" y="216" width="4" height="15" fill="#0a140a" stroke="#3c9040" stroke-width="1.2"/><rect x="123.6" y="210.0" width="1.2" height="15" fill="#3c9040" opacity="0.6"/><rect x="121.7" y="216" width="4" height="3" fill="#b8e8b0" stroke="#3c9040" stroke-width="1.2"/><rect x="130.9" y="211.0" width="1.2" height="15" fill="#3c9040" opacity="0.6"/><rect x="129.0" y="217" width="4" height="3" fill="#b8e8b0" stroke="#3c9040" stroke-width="1.2"/><rect x="137.9" y="208.0" width="1.2" height="16" fill="#2828c8" opacity="0.6"/><rect x="136.0" y="214" width="4" height="4" fill="#2828c8" stroke="#2828c8" stroke-width="1.2"/><rect x="145.4" y="207.0" width="1.2" height="16" fill="#c02030" opacity="0.6"/><rect x="143.5" y="213" width="4" height="4" fill="#c02030" stroke="#c02030" stroke-width="1.2"/><rect x="152.9" y="159.0" width="1.2" height="57" fill="#3030e8" opacity="0.6"/><rect x="151.0" y="161" width="4" height="53" fill="#3030e8" stroke="#3030e8" stroke-width="1.2"/><rect x="159.9" y="159.0" width="1.2" height="28" fill="#e02030" opacity="0.6"/><rect x="158.0" y="161" width="4" height="24" fill="#e02030" stroke="#e02030" stroke-width="1.2"/><rect x="167.9" y="173.0" width="1.2" height="28" fill="#3c9040" opacity="0.6"/><rect x="166.0" y="179" width="4" height="16" fill="#0a140a" stroke="#3c9040" stroke-width="1.2"/><rect x="174.5" y="175.0" width="1.2" height="22" fill="#3c9040" opacity="0.6"/><rect x="172.6" y="181" width="4" height="10" fill="#b8e8b0" stroke="#3c9040" stroke-width="1.2"/><rect x="180.9" y="180.0" width="1.2" height="16" fill="#3c9040" opacity="0.6"/><rect x="179.0" y="186" width="4" height="4" fill="#0a140a" stroke="#3c9040" stroke-width="1.2"/><rect x="187.9" y="181.0" width="1.2" height="16" fill="#3c9040" opacity="0.6"/><rect x="186.0" y="187" width="4" height="4" fill="#b8e8b0" stroke="#3c9040" stroke-width="1.2"/><rect x="194.9" y="177.0" width="1.2" height="22" fill="#3c9040" opacity="0.6"/><rect x="193.0" y="183" width="4" height="10" fill="#0a140a" stroke="#3c9040" stroke-width="1.2"/><rect x="201.5" y="179.0" width="1.2" height="18" fill="#3c9040" opacity="0.6"/><rect x="199.6" y="185" width="4" height="6" fill="#b8e8b0" stroke="#3c9040" stroke-width="1.2"/><rect x="207.9" y="183.0" width="1.2" height="37" fill="#3c9040" opacity="0.6"/><rect x="206.0" y="189" width="4" height="25" fill="#b8e8b0" stroke="#3c9040" stroke-width="1.2"/><rect x="213.9" y="208.0" width="1.2" height="29" fill="#3c9040" opacity="0.6"/><rect x="212.0" y="214" width="4" height="17" fill="#b8e8b0" stroke="#3c9040" stroke-width="1.2"/><rect x="220.9" y="225.0" width="1.2" height="24" fill="#3c9040" opacity="0.6"/><rect x="219.0" y="231" width="4" height="12" fill="#b8e8b0" stroke="#3c9040" stroke-width="1.2"/><rect x="227.5" y="229.0" width="1.2" height="26" fill="#3c9040" opacity="0.6"/><rect x="225.6" y="235" width="4" height="14" fill="#0a140a" stroke="#3c9040" stroke-width="1.2"/><rect x="233.7" y="235.0" width="1.2" height="22" fill="#3c9040" opacity="0.6"/><rect x="231.8" y="241" width="4" height="10" fill="#b8e8b0" stroke="#3c9040" stroke-width="1.2"/><rect x="239.9" y="245.0" width="1.2" height="33" fill="#3c9040" opacity="0.6"/><rect x="238.0" y="251" width="4" height="21" fill="#b8e8b0" stroke="#3c9040" stroke-width="1.2"/><rect x="244.9" y="268.0" width="1.2" height="17" fill="#e02030" opacity="0.6"/><rect x="243.0" y="270" width="4" height="13" fill="#e02030" stroke="#e02030" stroke-width="1.2"/><rect x="252.4" y="264.0" width="1.2" height="18" fill="#3030e8" opacity="0.6"/><rect x="250.5" y="266" width="4" height="14" fill="#3030e8" stroke="#3030e8" stroke-width="1.2"/><rect x="258.9" y="260.0" width="1.2" height="18" fill="#3c9040" opacity="0.6"/><rect x="257.0" y="266" width="4" height="6" fill="#b8e8b0" stroke="#3c9040" stroke-width="1.2"/><rect x="264.9" y="258.0" width="1.2" height="18" fill="#3c9040" opacity="0.6"/><rect x="263.0" y="264" width="4" height="6" fill="#0a140a" stroke="#3c9040" stroke-width="1.2"/><rect x="269.9" y="250.0" width="1.2" height="24" fill="#3c9040" opacity="0.6"/><rect x="268.0" y="256" width="4" height="12" fill="#0a140a" stroke="#3c9040" stroke-width="1.2"/><rect x="275.9" y="250.0" width="1.2" height="20" fill="#3c9040" opacity="0.6"/><rect x="274.0" y="256" width="4" height="8" fill="#b8e8b0" stroke="#3c9040" stroke-width="1.2"/><rect x="281.5" y="250.0" width="1.2" height="20" fill="#3c9040" opacity="0.6"/><rect x="279.6" y="256" width="4" height="8" fill="#0a140a" stroke="#3c9040" stroke-width="1.2"/><rect x="287.7" y="229.0" width="1.2" height="35" fill="#3c9040" opacity="0.6"/><rect x="285.8" y="235" width="4" height="23" fill="#0a140a" stroke="#3c9040" stroke-width="1.2"/><rect x="292.9" y="187.0" width="1.2" height="52" fill="#3c9040" opacity="0.6"/><rect x="291.0" y="193" width="4" height="40" fill="#0a140a" stroke="#3c9040" stroke-width="1.2"/><rect x="297.9" y="187.0" width="1.2" height="27" fill="#3c9040" opacity="0.6"/><rect x="296.0" y="193" width="4" height="15" fill="#b8e8b0" stroke="#3c9040" stroke-width="1.2"/><rect x="302.9" y="173.0" width="1.2" height="43" fill="#3c9040" opacity="0.6"/><rect x="301.0" y="179" width="4" height="31" fill="#0a140a" stroke="#3c9040" stroke-width="1.2"/>
</g>
<path d="M0 113 L70 112 L307 123" stroke="#000" stroke-width="3" fill="none"/>
<path d="M120 309 Q200 300 307 292 V309 Z" fill="url(#botst)"/>
<path d="M0 302 Q12 304 22 309 H0Z" fill="#9aa8e0" opacity="0.5"/>
</g>
<rect x="305" y="0" width="3" height="309" fill="#fff"/>
<rect x="0" y="0" width="1.5" height="309" fill="#fff" opacity="0.9"/>
<g fill="#d41a1a">
<circle cx="43" cy="14" r="10"/><circle cx="30" cy="28" r="7"/><circle cx="29" cy="15" r="3.5"/>
</g>
<g fill="#fff"><circle cx="43" cy="14" r="5"/><circle cx="30" cy="28" r="3.2"/><circle cx="29" cy="15" r="1.5"/></g>
<path d="M22 30 l-4 8 l-3 8 M19 38 l4 7 M52 22 l3 10 l6 4" stroke="#a8a8a8" stroke-width="2" fill="none"/>
<ellipse cx="93" cy="20" rx="13" ry="10.5" fill="none" stroke="#666" stroke-width="1.6"/><g fill="#4a4a4a"><circle cx="106.0" cy="20.0" r="2.9"/><circle cx="103.0" cy="26.7" r="3.1"/><circle cx="95.3" cy="30.3" r="2.9"/><circle cx="86.5" cy="29.1" r="2.5"/><circle cx="80.8" cy="23.6" r="2.3"/><circle cx="80.8" cy="16.4" r="2.3"/><circle cx="86.5" cy="10.9" r="2.3"/><circle cx="95.3" cy="9.7" r="2.3"/><circle cx="103.0" cy="13.3" r="2.4"/></g>
<g transform="translate(114 34) rotate(6.5) scale(1.21 1)">
<text x="1.5" y="1.5" font-family="Liberation Sans" font-weight="bold" font-size="29" fill="#8a8ad8" stroke="#8a8ad8" stroke-width="1.4">Electro EA</text>
<text x="0" y="0" font-family="Liberation Sans" font-weight="bold" font-size="29" fill="#d81e1e" stroke="#d81e1e" stroke-width="1.4" stroke-linejoin="round">Electro EA</text>
</g>
<g transform="translate(78 94) rotate(1.2) scale(0.78 1)">
<text x="0" y="0" font-family="Liberation Sans" font-size="31" fill="#e83a24" stroke="#ffc400" stroke-width="5" paint-order="stroke" stroke-linejoin="round" textLength="283" lengthAdjust="spacingAndGlyphs">V1.1 <tspan font-size="26" dy="-1">[</tspan><tspan dy="1">Source Code</tspan><tspan font-size="26" dy="-1">]</tspan></text>
</g>
</svg><div style="position:absolute;left:499px;top:232px;width:902px;height:454px;background:#f0f0f0"></div><div style="position:absolute;left:499px;top:232px;width:902px;height:44px;background:#fff"></div><div class="t " style="left:510px;top:246.76px;font-size:18px;line-height:18px;color:#000;transform:scaleX(0.9446);transform-origin:0 0;">Expert - ElectroEA-V1.1</div><svg style="left:1288px;top:242px" width="16" height="22"><path d="M5 6.2 Q5.8 4 8.8 4 Q12.2 4.1 12.2 7.4 Q12.2 9.6 9.9 11.2 Q8.3 12.3 8.3 14.6" fill="none" stroke="#111" stroke-width="1.25"/><rect x="7.3" y="17.2" width="2" height="2" fill="#111"/></svg><svg style="left:1358px;top:245px" width="18" height="18"><path d="M1.2 1.2 L16 16 M16 1.2 L1.2 16" stroke="#111" stroke-width="1.2"/></svg><div style="position:absolute;left:508px;top:313px;width:884px;height:320px;background:#fff;border:1px solid #d9d9d9"></div><div style="position:absolute;left:510px;top:288px;width:55px;height:26px;background:#f0f0f0;border:1px solid #d9d9d9;border-bottom:none"></div><div style="position:absolute;left:564px;top:288px;width:76px;height:26px;background:#f0f0f0;border:1px solid #d9d9d9;border-bottom:none"></div><div style="position:absolute;left:639px;top:284px;width:61px;height:30px;background:#fff;border:1px solid #d9d9d9;border-bottom:none"></div><div class="t " style="left:516px;top:292.61px;font-size:17px;line-height:17px;color:#000;transform:scaleX(0.9454);transform-origin:0 0;">About</div><div class="t " style="left:571px;top:292.61px;font-size:17px;line-height:17px;color:#000;transform:scaleX(0.9135);transform-origin:0 0;">Common</div><div class="t " style="left:647px;top:290.61px;font-size:17px;line-height:17px;color:#000;transform:scaleX(0.9501);transform-origin:0 0;">Inputs</div><div style="position:absolute;left:520px;top:323px;width:693px;height:301px;background:#fff;border:1px solid #828790"></div><div style="position:absolute;left:865px;top:326px;width:1px;height:26px;background:#e5e5e5"></div><div class="t " style="left:528px;top:329.61px;font-size:17px;line-height:17px;color:#000;transform:scaleX(0.9409);transform-origin:0 0;">Variable</div><div class="t " style="left:872px;top:329.61px;font-size:17px;line-height:17px;color:#000;transform:scaleX(0.9474);transform-origin:0 0;">Value</div><div style="position:absolute;left:521px;top:380px;width:691px;height:1px;background:#d5d5d5"></div><div style="position:absolute;left:865px;top:351px;width:1px;height:29px;background:#d5d5d5"></div><svg style="left:523px;top:354px" width="25" height="25" viewBox="0 0 25 25"><defs><linearGradient id="gb354" x1="0" y1="0" x2="1" y2="1"><stop offset="0" stop-color="#b0f0b0"/><stop offset="1" stop-color="#62d26e"/></linearGradient></defs>
<path d="M0.5 3.5 Q0.5 0.5 3.5 0.5 H19.5 L23.8 4.8 V21.8 L22.2 23.3 L20.6 24.3 L19 22.6 L17.3 21.4 L15.4 22.6 L13.4 21.4 L11.4 22.6 L9.4 21.4 L7.4 22.6 L5.4 21.4 L3.2 22.8 L0.5 22.4 Z" fill="url(#gb354)" stroke="#58bc64" stroke-width="0.9"/>
<path d="M17.6 0.8 V6.7 H23.6" fill="none" stroke="#58bc64" stroke-width="0.9" opacity="0.9"/><path d="M3.8 14.6 L11.8 7.6" stroke="#0a7a14" stroke-width="2.4" stroke-linecap="round" fill="none"/><path d="M14.3 13.2 Q14.6 14.4 16.2 14.4 H19.3" stroke="#0a7a14" stroke-width="2.1" stroke-linecap="round" fill="none"/></svg><div class="t " style="left:553.6px;top:358.61px;font-size:17px;line-height:17px;color:#000;transform:scaleX(0.9344);transform-origin:0 0;">RemoveDateFilter</div><div class="t " style="left:871.4px;top:358.61px;font-size:17px;line-height:17px;color:#000;transform:scaleX(0.9217);transform-origin:0 0;">true</div><div style="position:absolute;left:521px;top:381px;width:691px;height:30px;background:#ebebeb"></div><div style="position:absolute;left:521px;top:410px;width:691px;height:1px;background:#d5d5d5"></div><div style="position:absolute;left:865px;top:381px;width:1px;height:29px;background:#d5d5d5"></div><svg style="left:523px;top:384px" width="25" height="25" viewBox="0 0 25 25"><defs><linearGradient id="gb384" x1="0" y1="0" x2="1" y2="1"><stop offset="0" stop-color="#b0f0b0"/><stop offset="1" stop-color="#62d26e"/></linearGradient></defs>
<path d="M0.5 3.5 Q0.5 0.5 3.5 0.5 H19.5 L23.8 4.8 V21.8 L22.2 23.3 L20.6 24.3 L19 22.6 L17.3 21.4 L15.4 22.6 L13.4 21.4 L11.4 22.6 L9.4 21.4 L7.4 22.6 L5.4 21.4 L3.2 22.8 L0.5 22.4 Z" fill="url(#gb384)" stroke="#58bc64" stroke-width="0.9"/>
<path d="M17.6 0.8 V6.7 H23.6" fill="none" stroke="#58bc64" stroke-width="0.9" opacity="0.9"/><path d="M3.8 14.6 L11.8 7.6" stroke="#0a7a14" stroke-width="2.4" stroke-linecap="round" fill="none"/><path d="M14.3 13.2 Q14.6 14.4 16.2 14.4 H19.3" stroke="#0a7a14" stroke-width="2.1" stroke-linecap="round" fill="none"/></svg><div class="t " style="left:553.6px;top:388.61px;font-size:17px;line-height:17px;color:#000;transform:scaleX(0.9326);transform-origin:0 0;">UseFixedLot</div><div class="t " style="left:871.4px;top:388.61px;font-size:17px;line-height:17px;color:#000;transform:scaleX(0.9190);transform-origin:0 0;">false</div><div style="position:absolute;left:521px;top:440px;width:691px;height:1px;background:#d5d5d5"></div><div style="position:absolute;left:865px;top:411px;width:1px;height:29px;background:#d5d5d5"></div><svg style="left:523px;top:414px" width="25" height="25" viewBox="0 0 25 25"><defs><linearGradient id="gd414" x1="0" y1="0" x2="1" y2="1"><stop offset="0" stop-color="#ccf2fa"/><stop offset="1" stop-color="#80d2e6"/></linearGradient></defs>
<path d="M0.5 3.5 Q0.5 0.5 3.5 0.5 H19.5 L23.8 4.8 V21.8 L22.2 23.3 L20.6 24.3 L19 22.6 L17.3 21.4 L15.4 22.6 L13.4 21.4 L11.4 22.6 L9.4 21.4 L7.4 22.6 L5.4 21.4 L3.2 22.8 L0.5 22.4 Z" fill="url(#gd414)" stroke="#64bcd2" stroke-width="0.9"/>
<path d="M17.6 0.8 V6.7 H23.6" fill="none" stroke="#64bcd2" stroke-width="0.9" opacity="0.9"/><g stroke="#1a6a80" fill="none"><path d="M3.6 6.6 L5.6 4.9 V14.6" stroke-width="1.8"/><path d="M6.9 14.6 L9.4 5.2" stroke-width="1.1"/><path d="M10.2 9.2 Q10.4 7.9 12.4 7.9 Q14.5 7.9 14.5 9.7 Q14.5 11.1 12.1 12.4 L10.3 13.8 H15" stroke-width="1.7"/></g></svg><div class="t " style="left:553.6px;top:418.61px;font-size:17px;line-height:17px;color:#000;transform:scaleX(0.9125);transform-origin:0 0;">FixedLot</div><div class="t " style="left:871.4px;top:418.61px;font-size:17px;line-height:17px;color:#000;transform:scaleX(0.8463);transform-origin:0 0;">0.1</div><div style="position:absolute;left:521px;top:441px;width:691px;height:30px;background:#ebebeb"></div><div style="position:absolute;left:521px;top:470px;width:691px;height:1px;background:#d5d5d5"></div><div style="position:absolute;left:865px;top:441px;width:1px;height:29px;background:#d5d5d5"></div><svg style="left:523px;top:444px" width="25" height="25" viewBox="0 0 25 25"><defs><linearGradient id="gd444" x1="0" y1="0" x2="1" y2="1"><stop offset="0" stop-color="#ccf2fa"/><stop offset="1" stop-color="#80d2e6"/></linearGradient></defs>
<path d="M0.5 3.5 Q0.5 0.5 3.5 0.5 H19.5 L23.8 4.8 V21.8 L22.2 23.3 L20.6 24.3 L19 22.6 L17.3 21.4 L15.4 22.6 L13.4 21.4 L11.4 22.6 L9.4 21.4 L7.4 22.6 L5.4 21.4 L3.2 22.8 L0.5 22.4 Z" fill="url(#gd444)" stroke="#64bcd2" stroke-width="0.9"/>
<path d="M17.6 0.8 V6.7 H23.6" fill="none" stroke="#64bcd2" stroke-width="0.9" opacity="0.9"/><g stroke="#1a6a80" fill="none"><path d="M3.6 6.6 L5.6 4.9 V14.6" stroke-width="1.8"/><path d="M6.9 14.6 L9.4 5.2" stroke-width="1.1"/><path d="M10.2 9.2 Q10.4 7.9 12.4 7.9 Q14.5 7.9 14.5 9.7 Q14.5 11.1 12.1 12.4 L10.3 13.8 H15" stroke-width="1.7"/></g></svg><div class="t " style="left:553.6px;top:448.61px;font-size:17px;line-height:17px;color:#000;transform:scaleX(0.9076);transform-origin:0 0;">Risk</div><div class="t " style="left:871.4px;top:448.61px;font-size:17px;line-height:17px;color:#000;transform:scaleX(0.8674);transform-origin:0 0;">5.0</div><div style="position:absolute;left:521px;top:500px;width:691px;height:1px;background:#d5d5d5"></div><div style="position:absolute;left:865px;top:471px;width:1px;height:29px;background:#d5d5d5"></div><svg style="left:523px;top:474px" width="25" height="25" viewBox="0 0 25 25"><defs><linearGradient id="gi474" x1="0" y1="0" x2="1" y2="1"><stop offset="0" stop-color="#c4e0f8"/><stop offset="1" stop-color="#7cb0e0"/></linearGradient></defs>
<path d="M0.5 3.5 Q0.5 0.5 3.5 0.5 H19.5 L23.8 4.8 V21.8 L22.2 23.3 L20.6 24.3 L19 22.6 L17.3 21.4 L15.4 22.6 L13.4 21.4 L11.4 22.6 L9.4 21.4 L7.4 22.6 L5.4 21.4 L3.2 22.8 L0.5 22.4 Z" fill="url(#gi474)" stroke="#6098cc" stroke-width="0.9"/>
<path d="M17.6 0.8 V6.7 H23.6" fill="none" stroke="#6098cc" stroke-width="0.9" opacity="0.9"/><text x="2.9" y="16.6" font-family="Liberation Sans" font-weight="bold" font-size="10.6" fill="#0a2a52" textLength="15.2" lengthAdjust="spacingAndGlyphs">123</text></svg><div class="t " style="left:553.6px;top:478.61px;font-size:17px;line-height:17px;color:#000;transform:scaleX(0.9413);transform-origin:0 0;">Target_Pips</div><div class="t " style="left:871.4px;top:478.61px;font-size:17px;line-height:17px;color:#000;transform:scaleX(0.8461);transform-origin:0 0;">0</div><div style="position:absolute;left:521px;top:501px;width:691px;height:30px;background:#ebebeb"></div><div style="position:absolute;left:521px;top:530px;width:691px;height:1px;background:#d5d5d5"></div><div style="position:absolute;left:865px;top:501px;width:1px;height:29px;background:#d5d5d5"></div><svg style="left:523px;top:504px" width="25" height="25" viewBox="0 0 25 25"><defs><linearGradient id="gi504" x1="0" y1="0" x2="1" y2="1"><stop offset="0" stop-color="#c4e0f8"/><stop offset="1" stop-color="#7cb0e0"/></linearGradient></defs>
<path d="M0.5 3.5 Q0.5 0.5 3.5 0.5 H19.5 L23.8 4.8 V21.8 L22.2 23.3 L20.6 24.3 L19 22.6 L17.3 21.4 L15.4 22.6 L13.4 21.4 L11.4 22.6 L9.4 21.4 L7.4 22.6 L5.4 21.4 L3.2 22.8 L0.5 22.4 Z" fill="url(#gi504)" stroke="#6098cc" stroke-width="0.9"/>
<path d="M17.6 0.8 V6.7 H23.6" fill="none" stroke="#6098cc" stroke-width="0.9" opacity="0.9"/><text x="2.9" y="16.6" font-family="Liberation Sans" font-weight="bold" font-size="10.6" fill="#0a2a52" textLength="15.2" lengthAdjust="spacingAndGlyphs">123</text></svg><div class="t " style="left:553.6px;top:508.61px;font-size:17px;line-height:17px;color:#000;transform:scaleX(0.9545);transform-origin:0 0;">Target_Profit</div><div class="t " style="left:871.4px;top:508.61px;font-size:17px;line-height:17px;color:#000;transform:scaleX(0.8461);transform-origin:0 0;">0</div><div style="position:absolute;left:521px;top:560px;width:691px;height:1px;background:#d5d5d5"></div><div style="position:absolute;left:865px;top:531px;width:1px;height:29px;background:#d5d5d5"></div><svg style="left:523px;top:534px" width="25" height="25" viewBox="0 0 25 25"><defs><linearGradient id="gi534" x1="0" y1="0" x2="1" y2="1"><stop offset="0" stop-color="#c4e0f8"/><stop offset="1" stop-color="#7cb0e0"/></linearGradient></defs>
<path d="M0.5 3.5 Q0.5 0.5 3.5 0.5 H19.5 L23.8 4.8 V21.8 L22.2 23.3 L20.6 24.3 L19 22.6 L17.3 21.4 L15.4 22.6 L13.4 21.4 L11.4 22.6 L9.4 21.4 L7.4 22.6 L5.4 21.4 L3.2 22.8 L0.5 22.4 Z" fill="url(#gi534)" stroke="#6098cc" stroke-width="0.9"/>
<path d="M17.6 0.8 V6.7 H23.6" fill="none" stroke="#6098cc" stroke-width="0.9" opacity="0.9"/><text x="2.9" y="16.6" font-family="Liberation Sans" font-weight="bold" font-size="10.6" fill="#0a2a52" textLength="15.2" lengthAdjust="spacingAndGlyphs">123</text></svg><div class="t " style="left:553.6px;top:538.61px;font-size:17px;line-height:17px;color:#000;transform:scaleX(0.9224);transform-origin:0 0;">MagicNumber</div><div class="t " style="left:871.4px;top:538.61px;font-size:17px;line-height:17px;color:#000;transform:scaleX(0.9378);transform-origin:0 0;">777</div><div style="position:absolute;left:1225px;top:537px;width:156px;height:33px;background:#e1e1e1;border:1px solid #adadad"></div><div class="t " style="left:1285.6px;top:544.61px;font-size:17px;line-height:17px;color:#000;transform:scaleX(0.9202);transform-origin:0 0;">Load</div><div style="position:absolute;left:1225px;top:587px;width:156px;height:33px;background:#e1e1e1;border:1px solid #adadad"></div><div class="t " style="left:1285.6px;top:594.61px;font-size:17px;line-height:17px;color:#000;transform:scaleX(0.9033);transform-origin:0 0;">Save</div><div style="position:absolute;left:1034px;top:640px;width:111px;height:33px;background:#e1e1e1;border:2px solid #0078d7"></div><div class="t " style="left:1078.3px;top:647.61px;font-size:17px;line-height:17px;color:#000;transform:scaleX(0.8672);transform-origin:0 0;">OK</div><div style="position:absolute;left:1156px;top:640px;width:111px;height:33px;background:#e1e1e1;border:1px solid #adadad"></div><div class="t " style="left:1187px;top:647.61px;font-size:17px;line-height:17px;color:#000;transform:scaleX(0.9184);transform-origin:0 0;">Cancel</div><div style="position:absolute;left:1277px;top:640px;width:111px;height:33px;background:#e1e1e1;border:1px solid #adadad"></div><div class="t " style="left:1311.5px;top:647.61px;font-size:17px;line-height:17px;color:#000;transform:scaleX(0.9514);transform-origin:0 0;">Reset</div><svg style="left:1390px;top:676px" width="9" height="9"><g fill="#b8b8b8"><rect x="0" y="0" width="3" height="3"/><rect x="5" y="0" width="3" height="3"/><rect x="0" y="5" width="3" height="3"/><rect x="5" y="5" width="3" height="3"/></g></svg><div style="position:absolute;left:24px;top:857px;width:1891px;height:1px;background:#a0a0a0"></div><div style="position:absolute;left:24px;top:857px;width:1px;height:95px;background:#a0a0a0"></div><div style="position:absolute;left:25px;top:858px;width:1863px;height:31px;background:#fff"></div><div style="position:absolute;left:264px;top:860px;width:1px;height:29px;background:#e5e5e5"></div><div class="t " style="left:31px;top:865.76px;font-size:18px;line-height:18px;color:#000;transform:scaleX(0.9534);transform-origin:0 0;">Time</div><div class="t " style="left:271.6px;top:865.76px;font-size:18px;line-height:18px;color:#000;transform:scaleX(0.9488);transform-origin:0 0;">Message</div><div style="position:absolute;left:25px;top:889px;width:1863px;height:30px;background:#ebebeb"></div><div style="position:absolute;left:25px;top:889px;width:1863px;height:1px;background:#d5d5d5"></div><div style="position:absolute;left:263px;top:889px;width:1px;height:30px;background:#d5d5d5"></div><svg style="left:29px;top:894px" width="22" height="18"><defs><linearGradient id="wt" x1="0" y1="0" x2="0" y2="1"><stop offset="0" stop-color="#f0f070"/><stop offset="1" stop-color="#c8c818"/></linearGradient></defs><path d="M10 1.5 L19 16.5 H1 Z" fill="url(#wt)" stroke="#9a9a20" stroke-width="1.2" stroke-linejoin="round"/><rect x="9.2" y="7" width="1.6" height="5" fill="#8a8a10"/><rect x="9.2" y="13" width="1.6" height="1.6" fill="#8a8a10"/></svg><div class="t " style="left:55.8px;top:896.26px;font-size:18px;line-height:18px;color:#000;transform:scaleX(0.9726);transform-origin:0 0;">2022.02.09 05:15:14.427</div><div class="t " style="left:271.6px;top:896.26px;font-size:18px;line-height:18px;color:#000;transform:scaleX(0.9433);transform-origin:0 0;">Expert ElectroEA-V1.1 EURUSD,H1: loaded successfully</div><div style="position:absolute;left:1888px;top:858px;width:27px;height:61px;background:#f0f0f0;border-left:1px solid #fff"></div><svg style="left:1894px;top:866px" width="16" height="48"><path d="M2.5 10 L7.5 4.5 L12.5 10" stroke="#606060" stroke-width="3" fill="none"/><path d="M2.5 37 L7.5 42.5 L12.5 37" stroke="#606060" stroke-width="3" fill="none"/></svg><div style="position:absolute;left:24px;top:919px;width:1891px;height:1px;background:#000"></div><div style="position:absolute;left:25px;top:951px;width:1890px;height:1px;background:#fff"></div><div style="position:absolute;left:1914px;top:857px;width:1px;height:95px;background:#fff"></div><svg style="left:7px;top:860px" width="11" height="11"><path d="M1.5 1.5 L9.5 9.5 M9.5 1.5 L1.5 9.5" stroke="#000" stroke-width="2.4"/></svg><div style="position:absolute;left:2px;top:879px;width:21px;height:73px;background:linear-gradient(180deg,#afcaea,#8eb0d6)"></div><div class="t" style="left:2px;top:879px;width:21px;height:73px;"><div style="position:absolute;left:10.5px;top:36.5px;width:66px;height:18px;margin-left:-33px;margin-top:-9px;transform:rotate(-90deg)"><div style="font-size:18px;line-height:18px;color:#000;white-space:nowrap;transform:scaleX(0.9703);transform-origin:0 0">Terminal</div></div></div><div class="t " style="left:41.9px;top:925.76px;font-size:18px;line-height:18px;color:#808080;transform:scaleX(0.9061);transform-origin:0 0;">Trade</div><div class="t " style="left:116px;top:925.76px;font-size:18px;line-height:18px;color:#808080;transform:scaleX(0.9442);transform-origin:0 0;">Exposure</div><div class="t " style="left:218px;top:925.76px;font-size:18px;line-height:18px;color:#808080;transform:scaleX(1.0068);transform-origin:0 0;">Account History</div><div class="t " style="left:375.5px;top:925.76px;font-size:18px;line-height:18px;color:#808080;transform:scaleX(0.9332);transform-origin:0 0;">News</div><div class="t " style="left:469px;top:925.76px;font-size:18px;line-height:18px;color:#808080;transform:scaleX(0.9628);transform-origin:0 0;">Alerts</div><div class="t " style="left:544.3px;top:925.76px;font-size:18px;line-height:18px;color:#808080;transform:scaleX(1.0109);transform-origin:0 0;">Mailbox</div><div class="t " style="left:667px;top:925.76px;font-size:18px;line-height:18px;color:#808080;transform:scaleX(0.9995);transform-origin:0 0;">Company</div><div class="t " style="left:774.7px;top:925.76px;font-size:18px;line-height:18px;color:#808080;transform:scaleX(0.9816);transform-origin:0 0;">Market</div><div class="t " style="left:888.8px;top:925.76px;font-size:18px;line-height:18px;color:#808080;transform:scaleX(0.9452);transform-origin:0 0;">Signals</div><div class="t " style="left:975.6px;top:925.76px;font-size:18px;line-height:18px;color:#808080;transform:scaleX(0.9490);transform-origin:0 0;">Articles</div><div class="t " style="left:1062px;top:925.76px;font-size:18px;line-height:18px;color:#808080;transform:scaleX(0.9286);transform-origin:0 0;">Code Base</div><div class="t " style="left:1175px;top:925.76px;font-size:18px;line-height:18px;color:#808080;transform:scaleX(0.9259);transform-origin:0 0;">Experts</div><div style="position:absolute;left:101px;top:923px;width:1px;height:24px;background:#808080"></div><div style="position:absolute;left:203px;top:923px;width:1px;height:24px;background:#808080"></div><div style="position:absolute;left:360px;top:923px;width:1px;height:24px;background:#808080"></div><div style="position:absolute;left:454px;top:923px;width:1px;height:24px;background:#808080"></div><div style="position:absolute;left:529px;top:923px;width:1px;height:24px;background:#808080"></div><div style="position:absolute;left:652px;top:923px;width:1px;height:24px;background:#808080"></div><div style="position:absolute;left:759px;top:923px;width:1px;height:24px;background:#808080"></div><div style="position:absolute;left:874px;top:923px;width:1px;height:24px;background:#808080"></div><div style="position:absolute;left:960px;top:923px;width:1px;height:24px;background:#808080"></div><div style="position:absolute;left:1047px;top:923px;width:1px;height:24px;background:#808080"></div><div style="position:absolute;left:1160px;top:923px;width:1px;height:24px;background:#808080"></div><div style="position:absolute;left:1247px;top:919px;width:86px;height:30px;background:#fff;border:1px solid #000;border-top:none;box-shadow:1px 1px 0 rgba(0,0,0,0.25)"></div><div class="t " style="left:1261.7px;top:925.76px;font-size:18px;line-height:18px;color:#000;transform:scaleX(0.9384);transform-origin:0 0;">Journal</div><div class="t " style="left:421px;top:932.15px;font-size:14px;line-height:14px;color:#e01010;transform:scaleX(1.1238);transform-origin:0 0;font-weight:bold">99</div><div class="t " style="left:610.6px;top:932.15px;font-size:14px;line-height:14px;color:#e01010;transform:scaleX(1.0917);transform-origin:0 0;font-weight:bold">159</div><div class="t " style="left:833px;top:932.15px;font-size:14px;line-height:14px;color:#e01010;transform:scaleX(1.1290);transform-origin:0 0;font-weight:bold">112</div><div style="position:absolute;left:0px;top:956px;width:1920px;height:1px;background:#a8a8a8"></div><div style="position:absolute;left:0px;top:957px;width:1920px;height:1px;background:#fff"></div><div class="t " style="left:2.9px;top:968.26px;font-size:18px;line-height:18px;color:#000;transform:scaleX(0.9460);transform-origin:0 0;">For Help, press F1</div><div style="position:absolute;left:858px;top:961px;width:1px;height:26px;background:#a8a8a8"></div><div class="t " style="left:865px;top:968.26px;font-size:18px;line-height:18px;color:#000;transform:scaleX(0.9801);transform-origin:0 0;">Default</div><div style="position:absolute;left:1034px;top:961px;width:1px;height:26px;background:#a8a8a8"></div><div class="t " style="left:1040px;top:968.26px;font-size:18px;line-height:18px;color:#000;transform:scaleX(0.9755);transform-origin:0 0;">2022.02.01 17:00</div><div style="position:absolute;left:1195px;top:961px;width:1px;height:26px;background:#a8a8a8"></div><div class="t " style="left:1201px;top:968.26px;font-size:18px;line-height:18px;color:#000;transform:scaleX(0.9655);transform-origin:0 0;">O: 1.12629</div><div style="position:absolute;left:1305px;top:961px;width:1px;height:26px;background:#a8a8a8"></div><div class="t " style="left:1311.5px;top:968.26px;font-size:18px;line-height:18px;color:#000;transform:scaleX(0.9606);transform-origin:0 0;">H: 1.12647</div><div style="position:absolute;left:1413px;top:961px;width:1px;height:26px;background:#a8a8a8"></div><div class="t " style="left:1420px;top:968.26px;font-size:18px;line-height:18px;color:#000;transform:scaleX(0.9403);transform-origin:0 0;">L: 1.12446</div><div style="position:absolute;left:1518px;top:961px;width:1px;height:26px;background:#a8a8a8"></div><div class="t " style="left:1523.8px;top:968.26px;font-size:18px;line-height:18px;color:#000;transform:scaleX(0.9493);transform-origin:0 0;">C: 1.12466</div><div style="position:absolute;left:1625px;top:961px;width:1px;height:26px;background:#a8a8a8"></div><div class="t " style="left:1631px;top:968.26px;font-size:18px;line-height:18px;color:#000;transform:scaleX(0.9611);transform-origin:0 0;">V: 7882</div><div style="position:absolute;left:1728px;top:961px;width:1px;height:26px;background:#a8a8a8"></div><svg style="left:1734px;top:965px" width="40" height="20"><rect x="0" y="0" width="3" height="13.7" fill="#4a7000"/><rect x="0" y="15.9" width="3" height="4.1" fill="#8a0a00"/><rect x="5" y="0" width="3" height="11.9" fill="#4a7000"/><rect x="5" y="14.1" width="3" height="5.9" fill="#8a0a00"/><rect x="10" y="0" width="3" height="10.8" fill="#4a7000"/><rect x="10" y="13.2" width="3" height="6.8" fill="#8a0a00"/><rect x="15" y="0" width="3" height="8.6" fill="#4a7000"/><rect x="15" y="11.2" width="3" height="8.8" fill="#8a0a00"/><rect x="20" y="0" width="3" height="7.9" fill="#4a7000"/><rect x="20" y="10.0" width="3" height="10.0" fill="#8a0a00"/><rect x="25" y="0" width="3" height="5.7" fill="#4a7000"/><rect x="25" y="8.1" width="3" height="11.9" fill="#8a0a00"/><rect x="30" y="0" width="3" height="4.6" fill="#4a7000"/><rect x="30" y="6.9" width="3" height="13.1" fill="#8a0a00"/><rect x="35" y="0" width="3" height="2.8" fill="#4a7000"/><rect x="35" y="5.0" width="3" height="15.0" fill="#8a0a00"/></svg><div class="t " style="left:1779.5px;top:968.26px;font-size:18px;line-height:18px;color:#000;transform:scaleX(1.0194);transform-origin:0 0;">274/0 kb</div></body></html>
